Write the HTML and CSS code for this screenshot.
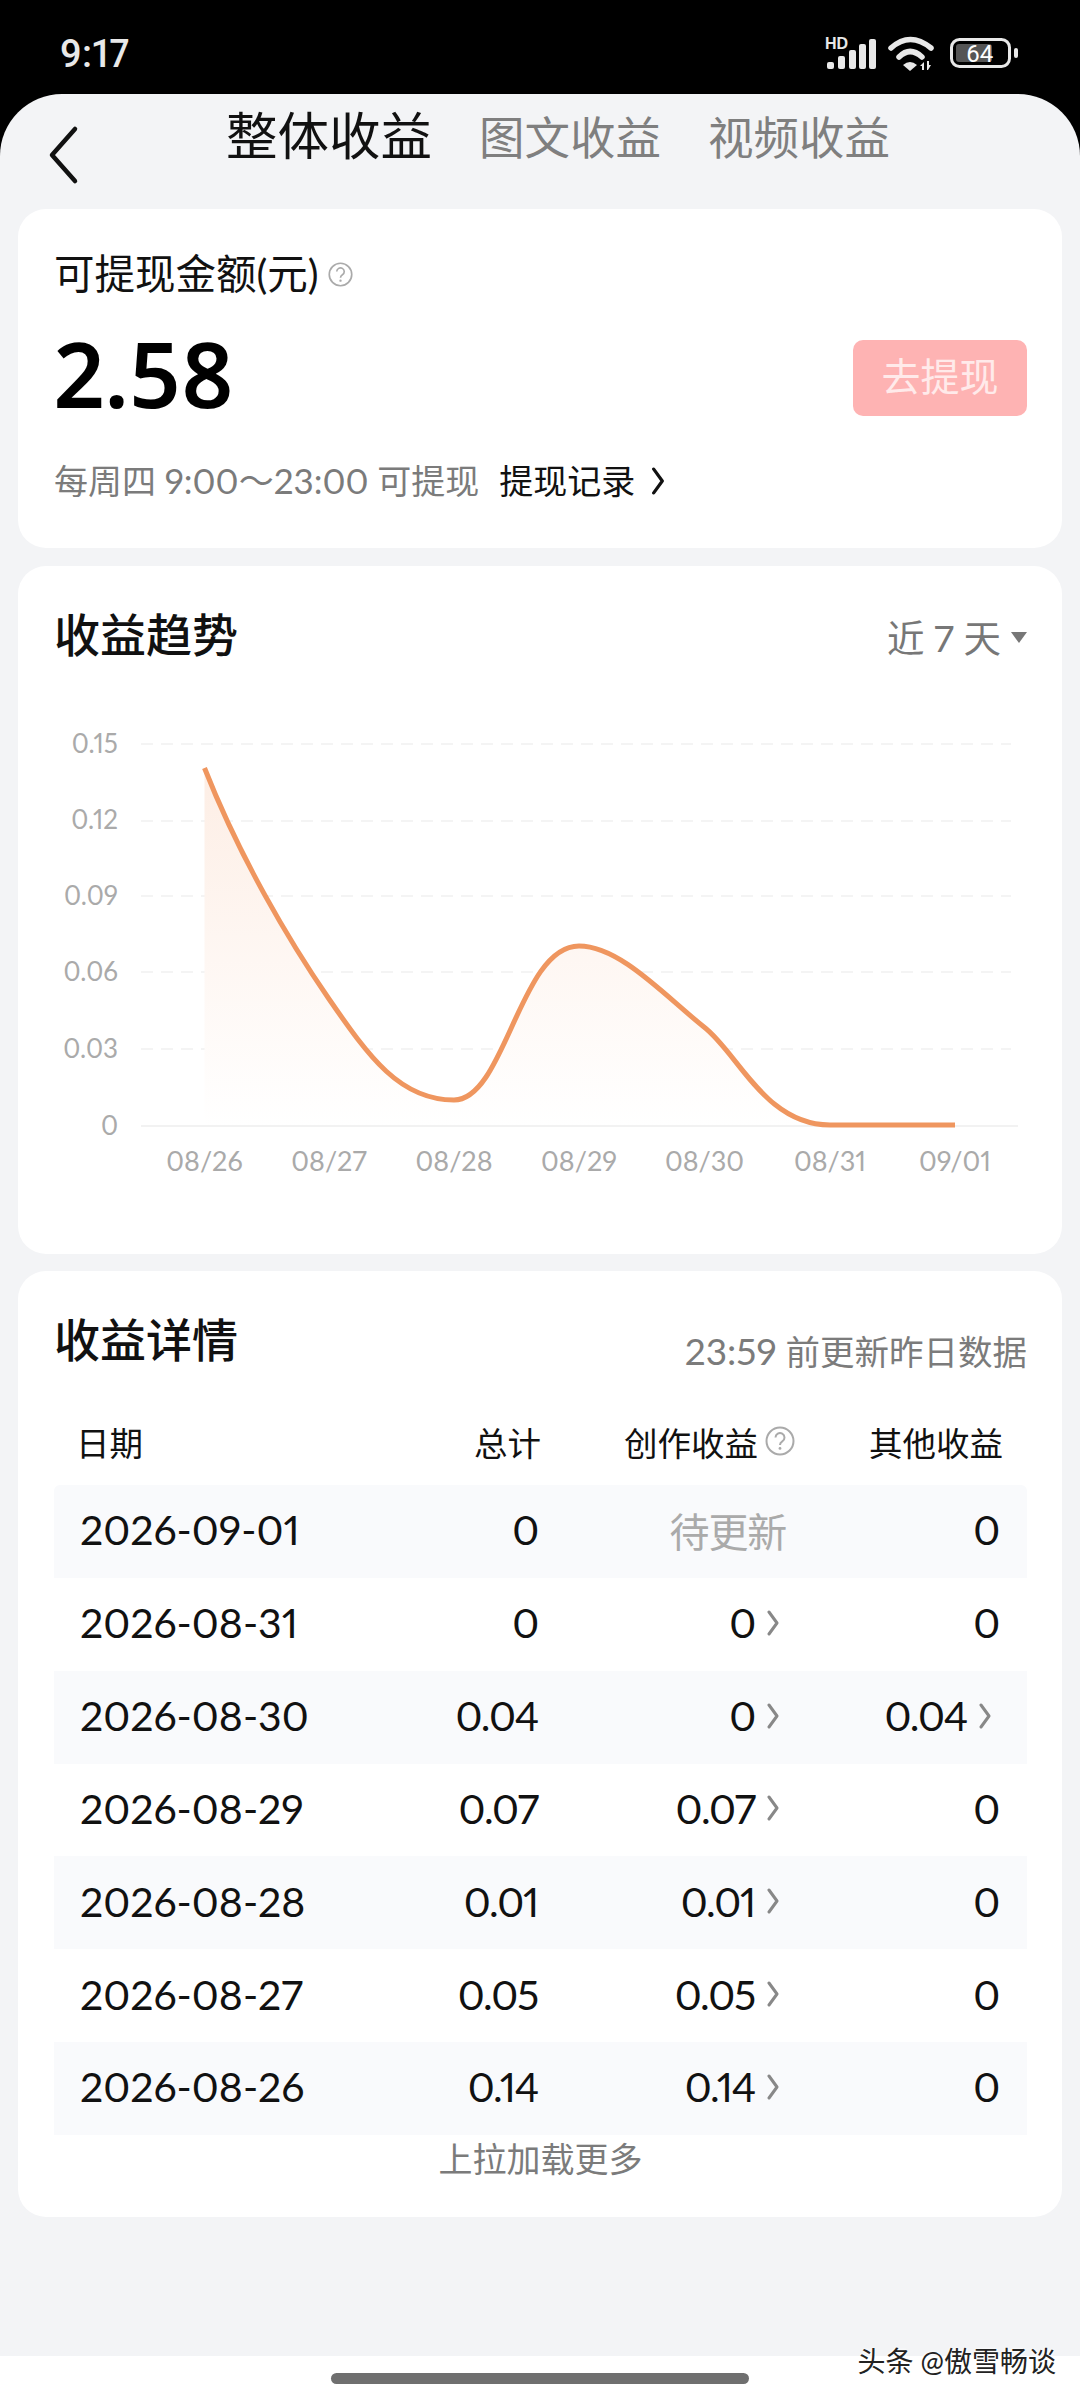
FILE: index.html
```html
<!DOCTYPE html>
<html lang="zh-CN">
<head>
    <meta charset="UTF-8">
    <meta name="viewport" content="width=device-width, initial-scale=1.0">
    <title>整体收益</title>
    <link rel="stylesheet" href="styles.css">
</head>
<body>
    <svg class="defs" width="0" height="0">
        <symbol id="chev" viewBox="0 0 12 26">
            <path d="M2 2 L10 13 L2 24" fill="none" stroke="currentColor" stroke-width="3" stroke-linecap="round" stroke-linejoin="round"/>
        </symbol>
        <symbol id="help" viewBox="0 0 30 30">
            <circle cx="15" cy="15" r="13.5" fill="none" stroke="currentColor" stroke-width="2"/>
            <path d="M10.5 11.5 a4.5 4.5 0 1 1 6.8 3.9 c-1.6 1-2.3 1.8-2.3 3.6" fill="none" stroke="currentColor" stroke-width="2"/>
            <circle cx="15" cy="22.4" r="1.4" fill="currentColor"/>
        </symbol>
    </svg>

    <div class="status-bar">
        <span class="time">9:17</span>
        <svg class="status-icons" viewBox="825 36 197 38" width="197" height="38">
            <text class="hd" x="827" y="50">HD</text>
            <g fill="#e8e8e8">
                <rect x="829" y="63" width="7" height="7" rx="2"/>
                <rect x="840" y="57" width="7" height="13" rx="2"/>
                <rect x="851" y="51" width="7" height="19" rx="2"/>
                <rect x="861" y="45" width="7" height="25" rx="2"/>
                <rect x="871" y="40" width="7" height="30" rx="2"/>
            </g>
            <g fill="none" stroke="#e8e8e8" stroke-width="5.500" stroke-linecap="round">
                <path d="M893 49 Q912 32 933 49"/>
                <path d="M901 58 Q912 47 924 58"/>
            </g>
            <path d="M905 66 Q912 60 919 66 L912 72 Z" fill="#e8e8e8"/>
            <path d="M922 67 l4 -4 v8 h-2 v-4 Z M929 62 h2 v4 h2 l-3 5 h-1 Z" fill="#e8e8e8"/>
            <rect x="953.500" y="40.500" width="58" height="27" rx="8" fill="none" stroke="#e8e8e8" stroke-width="3"/>
            <rect x="958" y="45" width="36" height="18" rx="3" fill="#555"/>
            <rect x="1016" y="49" width="4" height="10" rx="2" fill="#e8e8e8"/>
            <text class="batt" x="968" y="63">64</text>
        </svg>
    </div>

    <div class="sheet">
        <div class="nav">
            <svg class="back" viewBox="0 0 32 60" width="32" height="60">
                <path d="M28 4 L5 30 L28 56" fill="none" stroke="#111" stroke-width="4.500" stroke-linecap="round" stroke-linejoin="round"/>
            </svg>
            <div class="tabs">
                <span class="tab tab-active">整体收益</span>
                <span class="tab">图文收益</span>
                <span class="tab">视频收益</span>
            </div>
        </div>

        <div class="cards">
            <section class="card card-balance">
                <div class="balance-title">可提现金额(元)<svg class="help" width="25" height="25"><use href="#help"/></svg></div>
                <div class="balance-row">
                    <span class="amount">2.58</span>
                    <span class="withdraw-btn">去提现</span>
                </div>
                <div class="balance-note">
                    <span>每周四 <span class="note-time">9:00～23:00</span> 可提现</span>
                    <span class="record">提现记录</span>
                    <svg class="record-chev" width="14" height="28"><use href="#chev"/></svg>
                </div>
            </section>

            <section class="card card-trend">
                <div class="card-head card-head-end">
                    <h2>收益趋势</h2>
                    <span class="range">近 7 天<i class="caret"></i></span>
                </div>
                <svg class="chart" viewBox="18 680 1044 520" width="1044" height="520">
                    <defs>
                        <linearGradient id="areaFade" gradientUnits="userSpaceOnUse" x1="0" y1="769" x2="0" y2="1125">
                            <stop offset="0" stop-color="#fdeee5"/>
                            <stop offset="1" stop-color="#ffffff"/>
                        </linearGradient>
                    </defs>
                    <g class="grid">
                        <line x1="141" y1="743" x2="1011" y2="743"/>
                        <line x1="141" y1="820" x2="1011" y2="820"/>
                        <line x1="141" y1="895" x2="1011" y2="895"/>
                        <line x1="141" y1="971" x2="1011" y2="971"/>
                        <line x1="141" y1="1048" x2="1011" y2="1048"/>
                    </g>
                    <line class="axis" x1="141" y1="1125" x2="1018" y2="1125"/>
                    <path class="area" d="M204.500 767 C239.500 856 289 940 329 998 C369 1056 400 1099 454 1099 C505 1099 520 945 579 945 C620 945 665 995 704 1026 C738 1052 765 1124 830 1124 L204.500 1124 Z"/>
                    <path class="line" d="M204.500 767 C239.500 856 289 940 329 998 C369 1056 400 1099 454 1099 C505 1099 520 945 579 945 C620 945 665 995 704 1026 C738 1052 765 1124 830 1124 L955 1124"/>
                    <g class="y-labels">
                        <text x="118" y="752">0.15</text>
                        <text x="118" y="828">0.12</text>
                        <text x="118" y="904">0.09</text>
                        <text x="118" y="980">0.06</text>
                        <text x="118" y="1057">0.03</text>
                        <text x="118" y="1134">0</text>
                    </g>
                    <g class="x-labels">
                        <text x="204.500" y="1170">08/26</text>
                        <text x="329" y="1170">08/27</text>
                        <text x="454" y="1170">08/28</text>
                        <text x="579" y="1170">08/29</text>
                        <text x="704.500" y="1170">08/30</text>
                        <text x="830" y="1170">08/31</text>
                        <text x="955" y="1170">09/01</text>
                    </g>
                </svg>
            </section>

            <section class="card card-detail">
                <div class="card-head card-head-end">
                    <h2>收益详情</h2>
                    <span class="update-note"><span class="note-time">23:59</span> 前更新昨日数据</span>
                </div>
                <div class="table-head">
                    <span>日期</span>
                    <span class="num">总计</span>
                    <span class="num">创作收益<svg class="help help-th" width="30" height="30"><use href="#help"/></svg></span>
                    <span class="num">其他收益</span>
                </div>
                <div class="table-body">
                    <div class="row">
                        <span>2026-09-01</span>
                        <span class="num">0</span>
                        <span class="num pending">待更新</span>
                        <span class="num">0</span>
                    </div>
                    <div class="row">
                        <span>2026-08-31</span>
                        <span class="num">0</span>
                        <span class="num">0<svg class="chev"><use href="#chev"/></svg></span>
                        <span class="num">0</span>
                    </div>
                    <div class="row">
                        <span>2026-08-30</span>
                        <span class="num">0.04</span>
                        <span class="num">0<svg class="chev"><use href="#chev"/></svg></span>
                        <span class="num">0.04<svg class="chev chev-last"><use href="#chev"/></svg></span>
                    </div>
                    <div class="row">
                        <span>2026-08-29</span>
                        <span class="num">0.07</span>
                        <span class="num">0.07<svg class="chev"><use href="#chev"/></svg></span>
                        <span class="num">0</span>
                    </div>
                    <div class="row">
                        <span>2026-08-28</span>
                        <span class="num">0.01</span>
                        <span class="num">0.01<svg class="chev"><use href="#chev"/></svg></span>
                        <span class="num">0</span>
                    </div>
                    <div class="row">
                        <span>2026-08-27</span>
                        <span class="num">0.05</span>
                        <span class="num">0.05<svg class="chev"><use href="#chev"/></svg></span>
                        <span class="num">0</span>
                    </div>
                    <div class="row">
                        <span>2026-08-26</span>
                        <span class="num">0.14</span>
                        <span class="num">0.14<svg class="chev"><use href="#chev"/></svg></span>
                        <span class="num">0</span>
                    </div>
                </div>
                <div class="load-more">上拉加载更多</div>
            </section>
        </div>
    </div>

    <div class="home-area"><span class="home-bar"></span></div>
    <div class="watermark">头条 @傲雪畅谈</div>
</body>
</html>
```

FILE: styles.css
```css
html, body {
    margin: 0;
    padding: 0;
}
body {
    position: relative;
    width: 1080px;
    height: 2400px;
    overflow: hidden;
    display: flex;
    flex-direction: column;
    background-color: #000;
    color: #111;
    font-family: "Lato", "Noto Sans CJK SC", sans-serif;
    font-variant-numeric: proportional-nums;
}
.defs {
    position: absolute;
}

/* Status bar */
.status-bar {
    height: 94px;
    flex: none;
    box-sizing: border-box;
    padding: 14px 60px 0;
    display: flex;
    justify-content: space-between;
    align-items: center;
}
.time {
    color: #e8e8e8;
    font-family: "Roboto", sans-serif;
    font-size: 38px;
    font-weight: 500;
}
.status-icons {
    display: block;
}
.hd {
    fill: #e8e8e8;
    font-family: "Liberation Sans", sans-serif;
    font-size: 16px;
    font-weight: 700;
}
.batt {
    fill: #fff;
    font-family: "Roboto", sans-serif;
    font-size: 24px;
}

/* Sheet and tabs */
.sheet {
    flex: 1;
    background-color: #f3f4f6;
    border-radius: 62px 62px 0 0;
}
.nav {
    height: 115px;
    box-sizing: border-box;
    padding-left: 47px;
    display: flex;
    align-items: flex-start;
}
.back {
    display: block;
    margin-top: 31px;
}
.tabs {
    margin-left: 147px;
    margin-top: 11px;
    display: flex;
    align-items: baseline;
    gap: 47px;
}
.tab {
    color: #7f7f7f;
    font-size: 45.500px;
    line-height: 60px;
}
.tab-active {
    color: #111;
    font-size: 51.500px;
}

/* Cards */
.cards {
    display: flex;
    flex-direction: column;
    gap: 17.500px;
    padding: 0 18px;
}
.card {
    background: #fff;
    border-radius: 28px;
    padding: 0 35px 0 36px;
}
.card h2 {
    margin: 0;
    font-size: 46px;
    font-weight: 500;
    line-height: 60px;
}
.card-head {
    display: flex;
    justify-content: space-between;
    align-items: center;
}
.card-head-end {
    align-items: flex-end;
}
.help {
    color: #aaa;
    flex: none;
}

/* Balance card */
.card-balance {
    padding-top: 40px;
    padding-bottom: 45px;
}
.balance-title {
    display: flex;
    align-items: center;
    gap: 9px;
    font-size: 40.500px;
    line-height: 50px;
}
.balance-row {
    margin-top: 41px;
    display: flex;
    justify-content: space-between;
    align-items: flex-start;
}
.amount {
    font-family: "Noto Sans", sans-serif;
    font-size: 90px;
    font-weight: 600;
    line-height: 66px;
    color: #000;
}
.withdraw-btn {
    width: 174px;
    height: 76px;
    background-color: #feb3b3;
    border-radius: 10px;
    color: #ffeaea;
    font-size: 39px;
    line-height: 72px;
    text-align: center;
}
.balance-note {
    margin-top: 42px;
    display: flex;
    align-items: center;
    color: #7b7b7b;
    font-size: 34px;
    line-height: 44px;
}
.note-time {
    font-size: 35px;
}
.record {
    margin-left: 20px;
    color: #111;
}
.record-chev {
    margin-left: 16px;
    color: #111;
}

/* Trend card */
.card-trend {
    padding-top: 39px;
    padding-bottom: 53px;
}
.range {
    display: flex;
    align-items: center;
    color: #777;
    font-size: 37.500px;
    line-height: 54px;
}
.caret {
    margin-left: 10px;
    width: 0;
    height: 0;
    border-left: 8px solid transparent;
    border-right: 8px solid transparent;
    border-top: 11px solid #777;
}
.chart {
    display: block;
    margin: 16px -35px 0 -36px;
}
.grid line {
    stroke: #f4f4f4;
    stroke-width: 2;
    stroke-dasharray: 12 8;
}
.axis {
    stroke: #f2f2f2;
    stroke-width: 2;
}
.area {
    fill: url(#areaFade);
}
.line {
    fill: none;
    stroke: #ef965f;
    stroke-width: 5;
    stroke-linejoin: round;
}
.y-labels text {
    fill: #aaa;
    font-size: 26px;
    text-anchor: end;
}
.x-labels text {
    fill: #aaa;
    font-size: 27px;
    text-anchor: middle;
}

/* Detail card */
.card-detail {
    padding-top: 39px;
    padding-bottom: 36px;
}
.update-note {
    color: #7b7b7b;
    font-size: 34.500px;
    line-height: 36px;
}
.update-note .note-time {
    font-size: 37px;
}
.table-head,
.row {
    display: grid;
    align-items: center;
}
.table-head {
    margin-top: 41px;
    margin-bottom: 14px;
    height: 60px;
    padding-left: 22px;
    grid-template-columns: 324px 141px 254px 208px;
    font-size: 33.500px;
}
.num {
    display: flex;
    justify-content: flex-end;
    align-items: center;
}
.help-th {
    margin-left: 7px;
}
.row {
    box-sizing: border-box;
    height: 92.850px;
    padding-left: 26px;
    padding-bottom: 3px;
    grid-template-columns: 320px 138px 250px 211px;
    font-size: 41px;
}
.row .num {
    letter-spacing: -1.200px;
}
.row:nth-child(odd) {
    background-color: #f9fafc;
}
.row:first-child {
    border-radius: 6px 6px 0 0;
}
.pending {
    margin-right: 2px;
    color: #aaa;
    font-size: 40px;
}
.chev {
    width: 12px;
    height: 26px;
    margin-left: 12px;
    margin-right: 9px;
    color: #888;
}
.chev-last {
    margin-right: 8px;
}
.load-more {
    margin-top: 2px;
    color: #7b7b7b;
    font-size: 34px;
    line-height: 44px;
    text-align: center;
}

/* Bottom area */
.home-area {
    height: 44px;
    flex: none;
    background: #fff;
    display: flex;
    justify-content: center;
    padding-top: 17px;
    box-sizing: border-box;
}
.home-bar {
    width: 418px;
    height: 11px;
    border-radius: 6px;
    background-color: #6f6f6f;
}
.watermark {
    position: absolute;
    right: 24px;
    bottom: 24px;
    color: #222;
    font-size: 28px;
    line-height: 30px;
    text-shadow: 0 0 3px #fff, 0 0 3px #fff;
}
```
